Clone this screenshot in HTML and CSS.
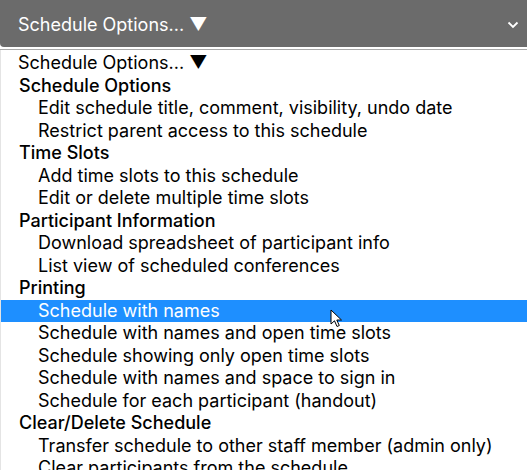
FILE: index.html
```html
<!DOCTYPE html>
<html>
<head>
<meta charset="utf-8">
<link rel="stylesheet" href="styles.css">
</head>
<body>
<div class="page">
  <div class="select">
    <span class="select-label">Schedule Options... ▼</span>
    <svg class="chev" width="12" height="8" viewBox="0 0 12 8"><path d="M1.5 1.5 L6 6 L10.5 1.5" fill="none" stroke="#fff" stroke-width="1.8"/></svg>
  </div>
  <div class="sep"></div>
  <div class="list">
    <div class="row opt top">Schedule Options... ▼</div>
    <div class="row grp">Schedule Options</div>
    <div class="row opt">Edit schedule title, comment, visibility, undo date</div>
    <div class="row opt">Restrict parent access to this schedule</div>
    <div class="row grp">Time Slots</div>
    <div class="row opt">Add time slots to this schedule</div>
    <div class="row opt">Edit or delete multiple time slots</div>
    <div class="row grp">Participant Information</div>
    <div class="row opt">Download spreadsheet of participant info</div>
    <div class="row opt">List view of scheduled conferences</div>
    <div class="row grp">Printing</div>
    <div class="row opt sel">Schedule with names
      <svg class="cursor" width="14" height="20" viewBox="0 0 14 20"><path d="M1 1 L1 15 L4.5 11.8 L7 17.5 L9.3 16.5 L6.8 11 L11.5 11 Z" fill="#fff" stroke="#000" stroke-width="1" stroke-linejoin="round"/></svg>
    </div>
    <div class="row opt">Schedule with names and open time slots</div>
    <div class="row opt">Schedule showing only open time slots</div>
    <div class="row opt">Schedule with names and space to sign in</div>
    <div class="row opt">Schedule for each participant (handout)</div>
    <div class="row grp">Clear/Delete Schedule</div>
    <div class="row opt">Transfer schedule to other staff member (admin only)</div>
    <div class="row opt">Clear participants from the schedule</div>
  </div>
</div>
</body>
</html>
```
FILE: styles.css
```css
html, body {
  margin: 0;
  padding: 0;
  background: #fff;
  overflow: hidden;
}
.page {
  width: 527px;
  height: 470px;
  font-family: Inter, "Noto Sans", sans-serif;
  font-size: 18px;
  color: #000;
}
.select {
  height: 47px;
  background: #6b6b6b;
  border-bottom-left-radius: 4px;
  display: flex;
  align-items: center;
  justify-content: space-between;
  padding: 0 8px 0 18px;
  color: #fff;
  font-size: 18px;
}
.select-label {
  padding-top: 2px;
}
.chev {
  margin-top: 2px;
}
.sep {
  height: 1px;
  margin-top: 2px;
  background: #a8a8a8;
}
.list {
  border-left: 1px solid #e4e4e4;
  padding-top: 2px;
}
.row {
  height: 22.5px;
  line-height: 22.5px;
  white-space: nowrap;
  position: relative;
}
.opt {
  padding-left: 37px;
}
.opt.top {
  padding-left: 17px;
}
.grp {
  padding-left: 18px;
  font-weight: 500;
}
.sel {
  background: #1e8fff;
  color: #fff;
}
.cursor {
  position: absolute;
  left: 329px;
  top: 9px;
}
```
